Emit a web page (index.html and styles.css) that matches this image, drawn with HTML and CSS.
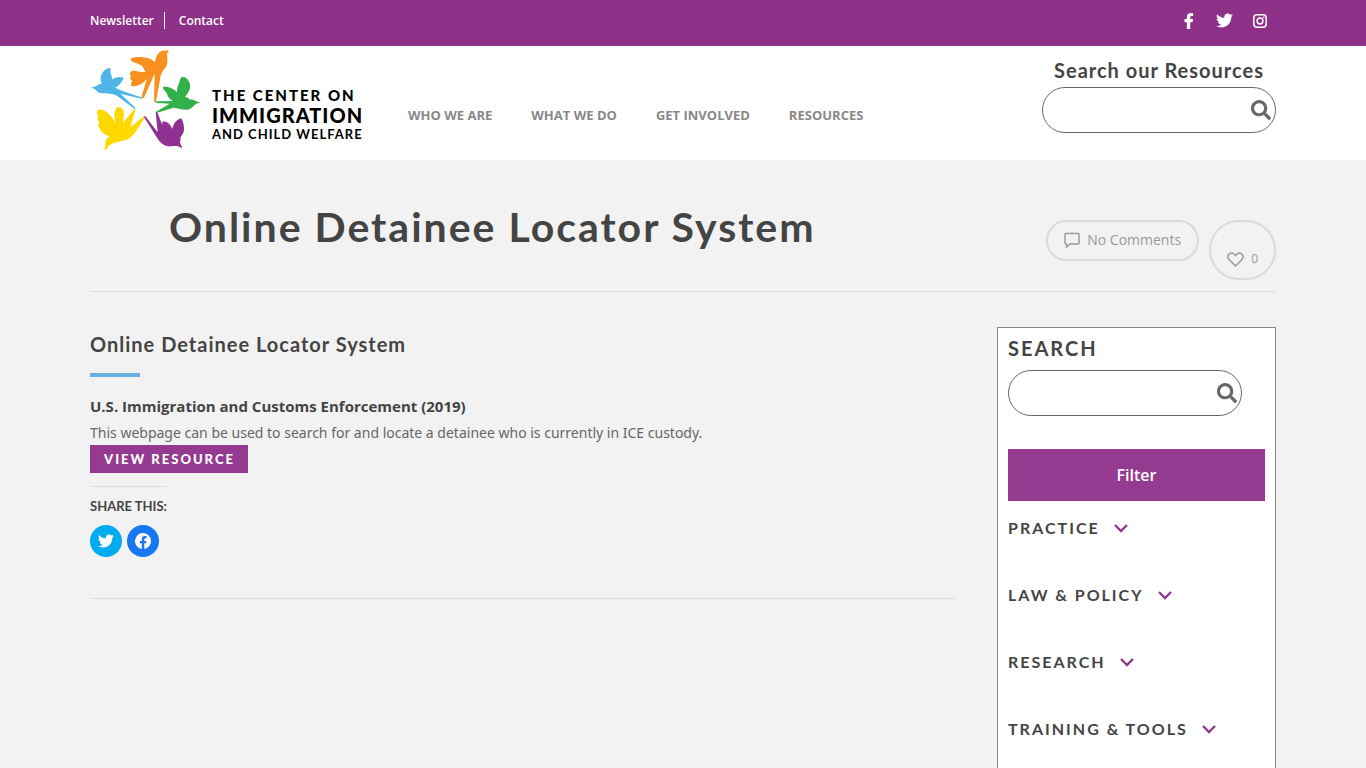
FILE: index.html
```html
<!DOCTYPE html>
<html lang="en">
<head>
<meta charset="utf-8">
<meta name="viewport" content="width=device-width, initial-scale=1">
<title>Online Detainee Locator System</title>
<link rel="stylesheet" href="styles.css">
</head>
<body>
<svg class="sprite" aria-hidden="true">
  <symbol id="twitter" viewBox="0 0 512 512"><path d="M459 152c0 4 0 9 0 14 0 138-106 298-299 298-59 0-115-17-160-47 8 1 16 1 25 1 49 0 94-16 130-45-46-1-85-31-98-73 6 1 13 2 20 2 9 0 19-1 27-4-48-10-84-52-84-103v-1c14 8 30 13 47 13-28-19-47-51-47-87 0-19 5-37 14-53 52 64 129 105 216 110-2-8-3-16-3-24 0-58 47-105 105-105 30 0 58 13 77 33 24-5 46-13 66-25-8 24-24 45-46 58 21-2 42-8 60-16-14 21-32 39-50 54z"/></symbol>
  <symbol id="lens" viewBox="0 0 512 512"><path d="M505 443l-100-100c-4-4-11-7-17-7h-16c28-35 44-80 44-128C416 93 323 0 208 0S0 93 0 208s93 208 208 208c48 0 93-16 128-44v16c0 6 3 12 7 17l100 100c9 9 25 9 34 0l28-28c9-9 9-25 0-34zM208 336c-71 0-128-57-128-128S137 80 208 80s128 57 128 128-57 128-128 128z"/></symbol>
  <symbol id="chevron" viewBox="0 0 14 9"><path d="M1 1l6 6 6-6" fill="none" stroke="currentColor" stroke-width="2.4"/></symbol>
</svg>

<div class="topbar">
  <div class="container topbar-row">
    <nav class="top-links" aria-label="Secondary">
      <a href="#">Newsletter</a>
      <a href="#">Contact</a>
    </nav>
    <div class="social">
      <a href="#" aria-label="Facebook"><svg class="icon-fb" viewBox="0 0 10 17"><path d="M2.700 17V9.900H.2V6.500h2.500V4.300C2.700 1.500 4.400.1 6.900.1c1.200 0 2.500.2 2.500.2v2.800H8C6.600 3.100 6.300 3.900 6.300 4.700v1.800h3l-.5 3.400H6.300V17z"/></svg></a>
      <a href="#" aria-label="Twitter"><svg class="icon-tw"><use href="#twitter"/></svg></a>
      <a href="#" aria-label="Instagram"><svg class="icon-ig" viewBox="0 0 14 14"><rect x=".8" y=".8" width="12.400" height="12.400" rx="3.200" fill="none" stroke="currentColor" stroke-width="1.500"/><circle cx="7" cy="7" r="2.900" fill="none" stroke="currentColor" stroke-width="1.500"/><circle cx="10.700" cy="3.300" r=".9"/></svg></a>
    </div>
  </div>
</div>

<header class="header">
  <div class="container header-row">
    <a class="logo" href="#">
      <svg class="birds" viewBox="15 3 345 327" aria-hidden="true">
        <path fill="#f7901e" d="M252 16L246 26C248 44 249 58 240 70C230 82 228 88 226 98L213 170L207 170L209 86L176 160L169 158L186 100C180 112 162 124 145 124C136 124 136 114 143 108C134 106 134 98 139 94C132 88 134 76 148 77C160 79 170 81 182 81C176 74 176 64 166 60C150 52 136 52 137 40C158 34 184 34 200 44C208 50 210 52 212 44C214 28 228 14 240 17Z"/>
        <path fill="#4db5e8" d="M18 128L32 124C42 118 44 116 50 116C42 98 50 78 66 71C74 66 79 70 76 76C75 86 82 94 82 104C90 96 104 94 116 98C112 108 104 122 90 128C108 136 140 148 171 157L170 161L106 146L151 188L149 192L98 154C84 144 66 147 50 145C36 144 34 130 18 128Z"/>
        <path fill="#32b14a" d="M347 173L332 168C326 164 320 162 315 164C310 158 304 156 300 156C314 140 320 122 312 110C308 100 300 95 291 96C284 100 284 112 280 120C276 128 276 136 276 142C266 130 246 124 234 126C234 136 244 140 246 146C248 156 256 164 264 168L212 169L212 173L254 176L212 201L214 204L266 188C286 190 302 200 318 190C328 182 330 174 347 173Z"/>
        <path fill="#ffd800" d="M58 314C62 304 60 300 62 290C64 280 68 276 74 274C56 268 46 260 46 252C38 244 38 238 44 234C36 224 36 218 40 214C34 206 36 196 40 194C58 192 74 208 86 224L92 234C88 218 86 202 92 194C96 184 102 186 106 188C116 190 118 202 116 214L114 234L148 192L152 192L136 246L178 213L180 217C160 246 146 280 120 286C98 292 74 292 64 314Z"/>
        <path fill="#8e3192" d="M291 307L286 296C284 288 288 286 286 278C294 266 298 260 297 248C296 234 292 224 288 220C274 224 264 238 262 252C256 236 244 228 232 230C230 238 236 250 238 256L217 202L212 202L218 262L180 212L177 216L213 274C226 296 240 306 260 304C274 302 280 302 291 310Z"/>
      </svg>
      <span class="logo-text">
        <span class="logo-1">THE CENTER ON</span>
        <span class="logo-2">IMMIGRATION</span>
        <span class="logo-3">AND CHILD WELFARE</span>
      </span>
    </a>
    <nav class="main-nav" aria-label="Main">
      <a href="#">WHO WE ARE</a>
      <a href="#">WHAT WE DO</a>
      <a href="#">GET INVOLVED</a>
      <a href="#">RESOURCES</a>
    </nav>
    <form class="header-search">
      <label for="site-search">Search our Resources</label>
      <div class="search-box">
        <input id="site-search" type="text">
        <button type="button" aria-label="Search"><svg><use href="#lens"/></svg></button>
      </div>
    </form>
  </div>
</header>

<main class="container">
  <div class="title-row">
    <h1>Online Detainee Locator System</h1>
    <div class="meta">
      <a class="pill comments" href="#"><svg class="icon-comment" viewBox="0 0 16 16"><path d="M2 1.500h12q1 0 1 1v8.500q0 1-1 1H6l-3.500 3V12H2q-1 0-1-1V2.500q0-1 1-1z"/></svg>No Comments</a>
      <a class="pill love" href="#"><svg class="icon-heart" viewBox="0 0 17 15"><path d="M8.500 14L2 7.500C-1 4 3-1 7 2l1.500 1.500L10 2c4-3 8 2 5 5.500z"/></svg>0</a>
    </div>
  </div>

  <div class="columns">
    <article class="content">
      <h2>Online Detainee Locator System</h2>
      <div class="accent"></div>
      <h3>U.S. Immigration and Customs Enforcement (2019)</h3>
      <p>This webpage can be used to search for and locate a detainee who is currently in ICE custody.</p>
      <a class="view" href="#">VIEW RESOURCE</a>
      <section class="share">
        <h4>SHARE THIS:</h4>
        <div class="share-links">
          <a class="share-tw" href="#" aria-label="Share on Twitter"><svg><use href="#twitter"/></svg></a>
          <a class="share-fb" href="#" aria-label="Share on Facebook"><svg viewBox="0 0 16 16"><path d="M16 8A8 8 0 1 0 6.800 15.900V10.300H4.800V8h2V6.200c0-2 1.200-3.100 3-3.100.9 0 1.800.2 1.800.2v2h-1c-1 0-1.300.6-1.300 1.200V8h2.200l-.4 2.300H9.300v5.600A8 8 0 0 0 16 8z"/></svg></a>
        </div>
      </section>
    </article>

    <aside class="sidebar">
      <form>
        <label for="resource-search">SEARCH</label>
        <div class="search-box">
          <input id="resource-search" type="text">
          <button type="button" aria-label="Search resources"><svg><use href="#lens"/></svg></button>
        </div>
        <button class="filter" type="button">Filter</button>
      </form>
      <div class="topics">
        <button type="button">PRACTICE<svg><use href="#chevron"/></svg></button>
        <button type="button">LAW &amp; POLICY<svg><use href="#chevron"/></svg></button>
        <button type="button">RESEARCH<svg><use href="#chevron"/></svg></button>
        <button type="button">TRAINING &amp; TOOLS<svg><use href="#chevron"/></svg></button>
      </div>
    </aside>
  </div>
</main>
</body>
</html>
```
FILE: styles.css
```css
* { box-sizing: border-box; }

body {
  margin: 0;
  background: #f2f2f2;
  color: #676767;
  font: 14px/28px "Open Sans", sans-serif;
}

h1, h2, h3, h4, p { margin: 0; }
a { color: inherit; text-decoration: none; }
svg { display: block; fill: currentColor; }
.sprite { position: absolute; width: 0; height: 0; }
.container { padding: 0 90px; }

h1, h2, h4, .header-search, .sidebar, .logo-text, .view {
  font-family: Lato, sans-serif;
  font-weight: 700;
  color: #444;
}

.topbar { background: #8e2f88; color: #fff; }
.topbar-row { display: flex; justify-content: space-between; align-items: center; height: 46px; padding-bottom: 5px; }
.top-links { display: flex; font-size: 12px; font-weight: 600; line-height: 17px; }
.top-links a + a { margin-left: 10px; padding-left: 14px; border-left: 1px solid #fff; }
.social { display: flex; align-items: center; gap: 20px; padding-right: 9px; }
.icon-fb { width: 10px; height: 16px; margin-right: 2px; }
.icon-tw { width: 17px; height: 17px; }
.icon-ig { width: 14px; height: 14px; }

.header { background: #fff; }
.header-row { display: flex; height: 114px; }
.logo { display: flex; }
.birds { width: 115px; height: 109px; }
.logo-text { display: flex; flex-direction: column; padding: 40px 0 0 7px; width: 161px; white-space: nowrap; color: #000; }
.logo-1 { font-size: 15px; line-height: 18px; font-weight: 900; letter-spacing: 2px; }
.logo-2 { font-size: 20px; line-height: 22px; font-weight: 900; letter-spacing: 1px; }
.logo-3 { font-size: 13px; line-height: 16px; letter-spacing: 1px; }

.main-nav { display: flex; gap: 39px; padding: 55px 0 0 42px; flex: 1; font-size: 13px; font-weight: 700; color: #888; white-space: nowrap; }

.header-search { width: 234px; padding-top: 8px; }
.header-search label { display: block; font-size: 20px; line-height: 33px; letter-spacing: 1px; text-align: center; white-space: nowrap; }
.search-box { display: flex; align-items: center; width: 234px; height: 46px; border: 1px solid #676767; border-radius: 23px; background: #fff; }
.search-box input { flex: 1; min-width: 0; height: 40px; margin-left: 16px; border: 0; outline: 0; background: none; font: 14px "Open Sans", sans-serif; }
.search-box button { border: 0; padding: 0 4px 1px 0; background: none; color: #676767; }
.search-box svg { width: 20px; height: 20px; }

.title-row { display: flex; justify-content: space-between; height: 132px; border-bottom: 1px solid #ddd; }
h1 { padding: 42px 0 0 79px; font-size: 41px; line-height: 50px; letter-spacing: 2px; white-space: nowrap; }
.meta { display: flex; align-items: flex-start; gap: 10px; padding-top: 60px; color: #999; }
.pill { display: flex; align-items: center; border: 2px solid #dadada; white-space: nowrap; }
.pill svg { fill: none; stroke: currentColor; stroke-width: 2; }
.comments { height: 41px; padding: 0 16px 2px; border-radius: 21px; gap: 7px; }
.comments .icon-comment { width: 16px; height: 16px; stroke-width: 1.5; }
.love { height: 60px; padding: 18px 16px 0; border-radius: 34px; gap: 7px; font-size: 12px; }
.love .icon-heart { width: 17px; height: 15px; stroke-width: 1.5; }

.columns { display: flex; align-items: flex-start; gap: 42px; padding-top: 35px; }
.content { flex: 1; min-width: 0; height: 272px; border-bottom: 1px solid #ddd; }
h2 { font-size: 20px; line-height: 34px; letter-spacing: 1px; }
.accent { width: 50px; height: 4px; margin-top: 12px; background: #6ab0de; }
h3 { margin-top: 15px; font-size: 15px; line-height: 28px; font-weight: 700; color: #444; }
.content p { padding-top: 1px; font-family: "Noto Sans", sans-serif; line-height: 24px; }
.view { display: inline-block; padding: 0 13px 0 14px; background: #943b91; color: #fff; font-size: 13px; font-weight: 900; letter-spacing: 2px; line-height: 28px; vertical-align: top; }
.share { display: table; margin-top: 13px; border-top: 1px solid #ddd; }
h4 { padding-top: 10px; font-size: 13px; line-height: 18px; }
.share-links { display: flex; gap: 5px; margin-top: 10px; }
.share-links a { display: grid; place-items: center; width: 32px; height: 32px; border-radius: 50%; color: #fff; }
.share-links svg { width: 16px; height: 16px; }
.share-tw { background: #00acee; }
.share-fb { background: #1877f2; }

.sidebar { width: 279px; min-height: 440px; padding: 4px 10px; border: 1px solid #888; border-bottom: 0; background: #fff; }
.sidebar label { display: block; font-size: 20px; line-height: 32px; letter-spacing: 2px; margin-bottom: 6px; }
.filter { display: block; width: 100%; height: 52px; margin-top: 33px; border: 0; background: #943b91; color: #fff; font: 600 16px "Open Sans", sans-serif; }
.topics { display: flex; flex-direction: column; align-items: flex-start; gap: 39px; padding: 13px 0 24px; }
.topics button { display: flex; align-items: center; gap: 14px; padding: 0; border: 0; background: none; color: #444; font: 700 16px/28px Lato, sans-serif; letter-spacing: 2px; white-space: nowrap; }
.topics svg { width: 14px; height: 9px; color: #8e3a8c; }
```
